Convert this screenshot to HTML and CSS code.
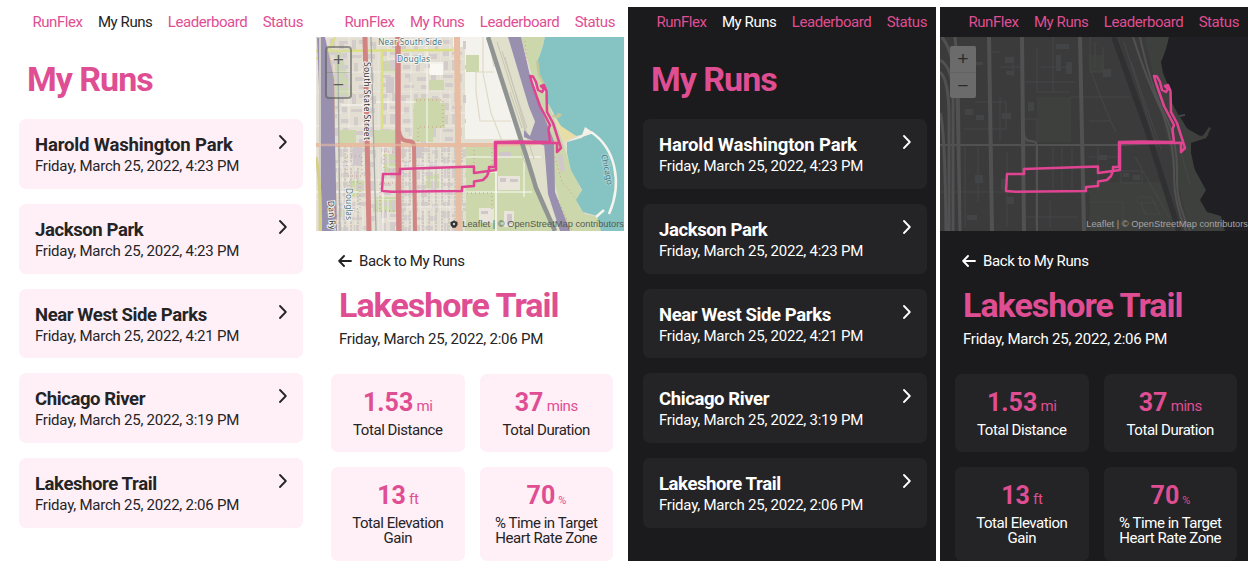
FILE: index.html
```html
<!DOCTYPE html>
<html lang="en">
<head>
<meta charset="utf-8">
<title>RunFlex</title>
<link rel="stylesheet" href="styles.css">
</head>
<body>
<svg class="defs" width="0" height="0" aria-hidden="true">
  <defs>
    <symbol id="chevron" viewBox="0 0 8 14"><path d="M1 1 6.8 7 1 13" fill="none" stroke="currentColor" stroke-width="1.8" stroke-linecap="round" stroke-linejoin="round"/></symbol>
    <symbol id="arrow" viewBox="0 0 14 12"><path d="M6 1 1.2 6 6 11M1.5 6H13" fill="none" stroke="currentColor" stroke-width="1.9" stroke-linecap="round" stroke-linejoin="round"/></symbol>
    <path id="route" d="M214 39 217 39.500 220 45 222 53 226 55 228 52 225 49 228 48 230.500 54 231 75 237 86 245 111 241 115 241 106 180 106 180 133 158 136V129.500L84 132V137H67L66 154 76 154.700 146 154V150L158 149V144.500L167 143 171 139 173 134V130H179V105L201 104.500 234 105 232.500 92 234 88 224 69 216 46Z"/>
    <path id="lake" d="M308 0H229Q226 14 221 25L223 36 230 53 232 66 239 79 245 90 260 99 269 97 266 101 251 105 251 116 255 133 266 153 260 163 267 175 281 179 285 194H308Z"/>
    <pattern id="blocks" width="62" height="54" patternUnits="userSpaceOnUse">
      <path class="bld" d="M3 3h8v4H3zM14 2h5v9h-5zM23 4h9v3h-4v5h-5zM36 3h4v10h-4zM43 3h7v4h-7zM54 5h6v8h-3v-4h-3zM3 12h6v7H3zM12 15h10v3H12zM26 16h5v7h-5zM35 18h11v3H35zM51 17h8v5h-8zM4 24h4v9H4zM12 23h9v4h-4v6h-5zM25 28h8v4h-8zM38 26h4v9h-4zM46 27h9v4h-9zM3 38h10v3H3zM17 37h5v8h-5zM27 37h7v8h-3v-4h-4zM39 40h9v4h-9zM53 36h5v10h-5zM5 46h8v4H5zM26 48h10v3H26zM43 48h6v4h-6z"/>
      <path class="lane" d="M0 0H62M0 35H62M0 0V54M33 0V54M10 0V22H31M47 10V35"/>
    </pattern>
    <pattern id="rows" width="13" height="43" patternUnits="userSpaceOnUse">
      <path class="row" d="M3 2V39M9 2V39" stroke-dasharray="2.500 1"/>
      <path class="lane" d="M0 0V43M0 41H13"/>
    </pattern>
  </defs>
</svg>
<main class="board">
  <section class="phone">
    <nav class="nav"><a>RunFlex</a><a class="current">My Runs</a><a>Leaderboard</a><a>Status</a></nav>
    <h1 class="title list-title">My Runs</h1>
    <div class="runs">
      <a class="run"><div><h2>Harold Washington Park</h2><p>Friday, March 25, 2022, 4:23 PM</p></div><svg><use href="#chevron"/></svg></a>
      <a class="run"><div><h2>Jackson Park</h2><p>Friday, March 25, 2022, 4:23 PM</p></div><svg><use href="#chevron"/></svg></a>
      <a class="run"><div><h2>Near West Side Parks</h2><p>Friday, March 25, 2022, 4:21 PM</p></div><svg><use href="#chevron"/></svg></a>
      <a class="run"><div><h2>Chicago River</h2><p>Friday, March 25, 2022, 3:19 PM</p></div><svg><use href="#chevron"/></svg></a>
      <a class="run"><div><h2>Lakeshore Trail</h2><p>Friday, March 25, 2022, 2:06 PM</p></div><svg><use href="#chevron"/></svg></a>
    </div>
  </section>

  <section class="phone">
    <nav class="nav"><a>RunFlex</a><a>My Runs</a><a>Leaderboard</a><a>Status</a></nav>
    <div class="map">
      <svg class="tiles" viewBox="0 0 308 194">
        <rect width="308" height="194" fill="#e3ded2"/>
        <path fill="#f4f2ec" d="M149 0H174L207 102H149zM160 35H178L197 84H164zM113 25h14v12h-14zM137 0h18v10h-18z"/>
        <path fill="#ccd8ac" d="M98 61H124V66H129V91H117V105H97zM113 43h15v10h-15zM24 93H40V106H24zM58 93H81V106H58zM19 15H25L38 61H19zM67 24H80V36H67zM67 117H81V135H67zM33 142H48V160H33zM60 160H80V175H60zM23 168H34V180H23zM110 137H123V151H110zM150 18H163V35H150zM150 108H205L239 194H150zM205 0H229Q225 15 221 25L223 40 232 66 247 105 251 119 267 158 262 166 269 177 283 180 285 194H250L237 138 231 90z"/>
        <path fill="#dfdfcc" d="M174 0H192L215 60 229 105 234 145 244 194H239L205 103z"/>
        <rect width="150" height="194" fill="url(#blocks)"/>
        <path fill="url(#rows)" d="M85 110H150V194H85zM22 110H47V194H22z"/>
        <path fill="#ccd8ac" d="M98 62H124V66H129V91H117V104H97zM113 43h14v10h-14zM58 93H80V106H58zM24 93H40V106H24zM150 108H174V143H150zM160 145H208L225 194H160z"/>
        <path fill="#e9e5da" d="M182 139h22v14h-22zM163 171h15v15h-15zM188 174h10v16h-10z"/>
        <path fill="#faf8f2" d="M114 27h13v11h-13z"/>
        <path fill="#d0c7ca" d="M183 115h12v5h-12zM184 141h6v4h-6zM194 142h8v3h-8zM191 177h5v10h-5zM165 174h7v3h-7zM241 118l5-1 3 16-4 3zM100 110h6v11h-6zM37 110h9v18h-9zM70 40h8v16h-8z"/>
        <g fill="none" stroke="#dfdac6" stroke-width="1.200"><path d="M167 0V36L175 76 186 104M160 35H178M160 35V55L164 84H195M174 8 178 30"/></g>
        <g fill="none" stroke="#fbfaf7" stroke-width="1"><path d="M150 120H225M150 155H216M180 106V194M160 135H180V194M208 118V160M67 110V194M111 10V106M25 68H48M60 65H100M0 155H142"/></g>
        <g fill="none" stroke="#c9c5b4"><path d="M181 5 218 122M186 14 211 91M189 20 214 107M194 55 206 91M205 115 228 175"/></g>
        <g fill="none" stroke="#ce9a87" stroke-dasharray="1 3"><path d="M100 63H127V90H102V104M68 115H80V133H68zM31 119H46V139H31zM33 145H44V172H33zM64 146H81V174H64zM151 108H176V131M151 156H176V174M158 113V133M239 120 246 145 262 164M209 4 211 31M242 163 256 194"/></g>
        <use href="#lake" fill="#86c4c4"/>
        <path fill="#e7dda5" d="M237 77 245 89 260 99 248 105z"/>
        <path d="M237 78Q241 82 244 78L241 77M221 24 223 38 231 54" fill="none" stroke="#c7c899" stroke-width="2.500"/>
        <path fill="#f5f1e8" d="M269 90 278 96 251 105 266 98z"/>
        <path d="M275 95C299 111 307 145 293 177M288 173 280 180" fill="none" stroke="#f5f4ed" stroke-width="2.500"/>
        <g fill="none" stroke="#e7bea3" stroke-width="4"><path d="M0 108H179L242 105"/><path d="M141 0 143 194" stroke-width="6"/><path d="M5 0Q17 20 18 55V108L20 194" stroke-width="2"/></g>
        <path d="M0 14 137 13M66 14V92M13 14 19 0M0 21Q12 24 18 42" fill="none" stroke="#dce084" stroke-width="2.500"/>
        <path fill="#9890ae" d="M1 0H9L18 42 19 106 21 194H6L4 106 3 50zM192 0H205L215 43 227 77 238 104 239 155 254 194H244L232 157 228 106 213 70zM208 93 214 99 220 82 229 109 220 105 208 100z"/>
        <path d="M0 0H4V194" fill="none" stroke="#cfcbc8" stroke-width="2"/>
        <path d="M0 120Q5 144 4 194" fill="none" stroke="#d3cf86" stroke-width="3"/>
        <path d="M22 24 24 194M55 0 60 194" fill="none" stroke="#a5aaa6" stroke-width="1.300"/>
        <path d="M172 0 205 103Q214 130 220 151L239 194" fill="none" stroke="#8f9492" stroke-width="4.500"/>
        <g fill="none" stroke="#d18482" stroke-width="5"><path d="M49 0 53 194"/><path d="M82 0V98L83 194" stroke-width="5.500"/><path d="M83 94Q84 104 92 104 98 104 98 109L99 194" stroke-width="4"/></g>
        <path d="M0 108H179" fill="none" stroke="#e7bea3" stroke-width="2.500" opacity=".6"/>
        <g class="place"><text x="62" y="7.500" textLength="64">Near South Side</text><text x="81" y="25" textLength="33">Douglas</text><text transform="translate(30 151) rotate(90)" textLength="32">Douglas</text><text class="street" transform="translate(48 25) rotate(90)" textLength="78">South State Street</text><text class="street" transform="translate(12 164) rotate(86)" textLength="29">Dan Ry</text><text class="water" transform="translate(285 118) rotate(78)" textLength="31">Chicago</text></g>
        <use href="#route" class="route"/>
      </svg>
      <div class="zoom"><span>+</span><span>−</span></div>
      <div class="credit"><svg viewBox="0 0 8 8"><path d="M4 .2Q5 1.300 7.500 2V5L5.500 7.800H2.500L.5 5V2Q3 1.300 4 .2Z" fill="#333"/><circle cx="4" cy="4" r="1.200" fill="#cfd4c5"/></svg><span>Leaflet | © OpenStreetMap contributors</span></div>
    </div>
    <div class="detail">
      <a class="back"><svg><use href="#arrow"/></svg><span>Back to My Runs</span></a>
      <h1 class="title trail">Lakeshore Trail</h1>
      <p class="date">Friday, March 25, 2022, 2:06 PM</p>
      <div class="stats">
        <div class="stat"><p class="value"><b>1.53</b> mi</p><p>Total Distance</p></div>
        <div class="stat"><p class="value"><b>37</b> mins</p><p>Total Duration</p></div>
        <div class="stat tall"><p class="value"><b>13</b> ft</p><p>Total Elevation<br>Gain</p></div>
        <div class="stat tall"><p class="value"><b>70</b><small>%</small></p><p>% Time in Target<br>Heart Rate Zone</p></div>
      </div>
    </div>
  </section>

  <section class="phone dark">
    <nav class="nav"><a>RunFlex</a><a class="current">My Runs</a><a>Leaderboard</a><a>Status</a></nav>
    <h1 class="title list-title">My Runs</h1>
    <div class="runs">
      <a class="run"><div><h2>Harold Washington Park</h2><p>Friday, March 25, 2022, 4:23 PM</p></div><svg><use href="#chevron"/></svg></a>
      <a class="run"><div><h2>Jackson Park</h2><p>Friday, March 25, 2022, 4:23 PM</p></div><svg><use href="#chevron"/></svg></a>
      <a class="run"><div><h2>Near West Side Parks</h2><p>Friday, March 25, 2022, 4:21 PM</p></div><svg><use href="#chevron"/></svg></a>
      <a class="run"><div><h2>Chicago River</h2><p>Friday, March 25, 2022, 3:19 PM</p></div><svg><use href="#chevron"/></svg></a>
      <a class="run"><div><h2>Lakeshore Trail</h2><p>Friday, March 25, 2022, 2:06 PM</p></div><svg><use href="#chevron"/></svg></a>
    </div>
  </section>

  <section class="phone dark">
    <nav class="nav"><a>RunFlex</a><a>My Runs</a><a>Leaderboard</a><a>Status</a></nav>
    <div class="map">
      <svg class="tiles" viewBox="0 0 308 194">
        <rect width="308" height="194" fill="#3b3b3c"/>
        <path fill="#3d403d" d="M97 60H131V105H97zM150 18H163V35H150zM150 145H220L239 194H150zM205 0H229L224 26 239 78 252 106 253 130 266 153 263 163 281 180 283 194H250L233 130z"/>
        <g fill="none" stroke="#474748"><path d="M150 0V32L160 58 171 85 176 95M163 10V35H150M130 60H190M24 92H66V65H35M0 155H150M96 110V190M113 110V155M122 110V155M132 110V155M158 110V155M25 110V190M38 110V165M67 115V190M60 30H83M60 15H48M85 45H135M97 10V55H130M113 0V55M101 30H132M85 82H97V105H85M149 120H179M150 165H183V187H160M181 134H202V146H181zM198 160Q195 165 200 166H216M198 160H211L220 177H205L201 166M35 8V50M60 60V104M73 20V40M149 84H170M155 5V31M110 164V190M86 180H137M177 0 210 104M184 5 217 110M191 25 221 112M195 120 229 180M239 108 250 148"/></g>
        <path fill="#434445" d="M65 20h9v6h-9zM66 34h8v4h-8zM25 40h8v5h-8zM35 25h8v3h-8zM116 7h13v5h-13zM116 18h5v16h-5zM126 25h6v12h-6zM88 65h6v9h-6zM25 72h8v6h-8zM36 78h8v5h-8zM62 76h9v6h-9zM35 138h8v8h-8zM66 160h8v7h-8zM27 178h10v5H27zM159 118h8v5h-8zM163 32h8v8h-8zM183 136h6v4h-6zM193 138h7v5h-7zM61 142h4v11h-4z"/>
        <path d="M174 0 205 87 239 194" fill="none" stroke="#303032" stroke-width="5.500"/>
        <use href="#lake" fill="#1f1f24"/>
        <path fill="#3d403d" d="M239 78 248 93 262 100 269 90 271 91 266 101 251 106 243 98z"/>
        <path d="M239 79 245 78" fill="none" stroke="#454746" stroke-width="2"/>
        <g fill="none" stroke="#515152" stroke-width="3"><path d="M49 0 52 194M82 0 84 194M140 0 144 194" stroke-width="4"/><path d="M0 108H179L242 105M84 95Q84 104 91 104 97 104 97 110V194" stroke-width="2"/><path d="M2 0Q15 17 17 60L20 194M0 23Q13 30 13 62V194M0 35Q9 43 9 80V194M15 0 18 30 20 194M0 76Q5 90 6 194"/><path d="M193 0Q207 44 223 77 235 110 234 140 234 165 246 194M200 0Q210 48 226 80 238 105 237 142 236 165 250 194" stroke-width="2"/></g>
        <use href="#route" class="route"/>
      </svg>
      <div class="zoom"><span>+</span><span>−</span></div>
      <div class="credit"><span>Leaflet | © OpenStreetMap contributors</span></div>
    </div>
    <div class="detail">
      <a class="back"><svg><use href="#arrow"/></svg><span>Back to My Runs</span></a>
      <h1 class="title trail">Lakeshore Trail</h1>
      <p class="date">Friday, March 25, 2022, 2:06 PM</p>
      <div class="stats">
        <div class="stat"><p class="value"><b>1.53</b> mi</p><p>Total Distance</p></div>
        <div class="stat"><p class="value"><b>37</b> mins</p><p>Total Duration</p></div>
        <div class="stat tall"><p class="value"><b>13</b> ft</p><p>Total Elevation<br>Gain</p></div>
        <div class="stat tall"><p class="value"><b>70</b><small>%</small></p><p>% Time in Target<br>Heart Rate Zone</p></div>
      </div>
    </div>
  </section>
</main>
</body>
</html>
```

FILE: styles.css
```css
* { box-sizing: border-box; }
body { margin: 0; background: #fff; font: 15px/20px Roboto, "Liberation Sans", sans-serif; }
h1, h2, p { margin: 0; }
.defs { display: block; height: 0; }
.board { display: flex; gap: 4px; padding: 7px 0 0 4px; }
.phone {
  --bg: #fff; --card: #ffeff6; --text: #242426; --pink: #df4e92;
  width: 308px; height: 554px; flex: none; overflow: hidden;
  background: var(--bg); color: var(--text);
}
.dark { --bg: #1b1b1d; --card: #242426; --text: #fff; }

.nav { display: flex; justify-content: flex-end; gap: 15.3px; height: 30px; padding: 5px 9px 0 0; color: var(--pink); letter-spacing: -.42px; }
.nav a { white-space: nowrap; }
.current { color: var(--text); }

.title { color: var(--pink); font-weight: 700; font-size: 34px; line-height: 40px; letter-spacing: -1px; white-space: nowrap; }
.list-title { margin: 22px 0 0 23px; }

.runs { display: grid; gap: 15px; padding: 20px 9px 0 15px; }
.run { display: flex; justify-content: space-between; height: 69.8px; padding: 15px 16px 0 16px; border-radius: 7px; background: var(--card); }
.run h2 { font-size: 18.5px; line-height: 22px; letter-spacing: -.4px; white-space: nowrap; }
.run:first-child h2 { letter-spacing: -.15px; }
.run p, .date { letter-spacing: -.24px; white-space: nowrap; }
.run svg { width: 8px; height: 14px; margin-top: 1px; }

.map { position: relative; height: 194px; overflow: hidden; }
.tiles { display: block; width: 308px; height: 194px; }
.bld { fill: #d3cccb; }
.lane { fill: none; stroke: #f2efe8; stroke-width: .8; }
.row { fill: none; stroke: #cec8c0; stroke-width: 2; }
.route { fill: none; stroke: #df4391; stroke-width: 2.5; stroke-linejoin: round; }
.place { font: 8.5px "Noto Sans", sans-serif; fill: #4d7886; stroke: #f3f3ee; stroke-width: 2px; paint-order: stroke; }
.street { fill: #343434; }
.water { stroke: #a5d4d4; }
.zoom {
  position: absolute; left: 9px; top: 9px; width: 27px; height: 53px;
  border: 2px solid rgba(70, 70, 70, .5); border-radius: 4px; background: rgba(210, 210, 205, .25);
  color: #585858; font: 400 19px/26px "Liberation Mono", monospace; text-align: center;
}
.zoom span { display: block; height: 24px; }
.zoom span + span { border-top: 1px solid rgba(70, 70, 70, .2); }
.dark .zoom { width: 26px; left: 10px; height: 52px; border: 0; border-radius: 2px; background: #6b6b6b; color: #29292a; line-height: 28px; }
.dark .zoom span { height: 26px; }
.credit {
  position: absolute; right: 0; bottom: 0; display: flex; align-items: center; gap: 4px; height: 14px;
  font: 9.3px/14px "Liberation Sans", sans-serif; color: #555b52; white-space: nowrap;
}
.credit svg { width: 8px; height: 8px; }
.dark .credit { color: #a5a5a5; }

.detail { padding: 20px 11px 0 15px; }
.back { display: flex; align-items: center; gap: 7px; height: 20px; padding-left: 7px; letter-spacing: -.37px; }
.back svg { width: 14px; height: 12px; }
.trail { margin: 14px 0 0 8px; }
.date { margin: 4px 0 0 8px; }
.stats { display: grid; grid-template-columns: repeat(2, 133.5px); gap: 15px; margin-top: 24.5px; }
.stat { height: 78.5px; padding-top: 16px; border-radius: 7px; background: var(--card); line-height: 15px; letter-spacing: -.45px; text-align: center; }
.stat.tall { height: 93.5px; }
.value { margin-bottom: 4px; color: var(--pink); line-height: 26px; }
.value b { font-size: 25px; letter-spacing: 0; }
.value small { margin-left: 3px; font-size: 11px; line-height: 0; }
```
